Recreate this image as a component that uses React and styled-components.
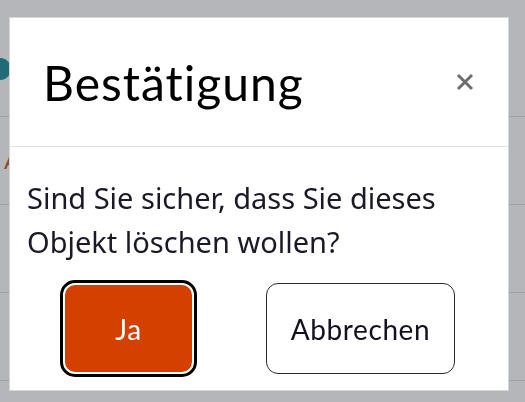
import React from "react";
import styled, { createGlobalStyle } from "styled-components";

const GlobalStyle = createGlobalStyle`
  html, body {
    margin: 0;
    padding: 0;
    background: #ffffff;
  }
  body {
    font-family: "Noto Sans", "Liberation Sans", sans-serif;
  }
`;

const Page = styled.div`
  width: 525px;
  height: 402px;
  overflow: hidden;
  background: #ffffff;
`;

const TopBar = styled.div`
  height: 116px;
  border-bottom: 1px solid #d8dbde;
  display: flex;
  align-items: center;
`;

const Logo = styled.span`
  display: inline-block;
  width: 22px;
  height: 22px;
  margin-left: -11px;
  margin-top: 22px;
  border-radius: 50%;
  background: #1a8a97;
`;

const Row = styled.div`
  height: 87px;
  border-bottom: 1px solid #d8dbde;
  display: flex;
  align-items: center;
  padding-left: 4px;
  color: #c4521a;
  font-size: 22px;
  font-family: "Lato", sans-serif;
`;

const Overlay = styled.div`
  position: fixed;
  inset: 0;
  background: rgba(46, 54, 62, 0.36);
`;

const Dialog = styled.div`
  position: fixed;
  left: 10px;
  top: 18px;
  width: 498px;
  height: 372px;
  background: #ffffff;
  box-shadow: 0 0 0 1px #d4d6d8;
  display: flex;
  flex-direction: column;
`;

const Header = styled.div`
  height: 128px;
  border-bottom: 1px solid #e2e2e2;
  display: flex;
  align-items: center;
  justify-content: space-between;
  padding: 0 32px 0 33px;
`;

const Title = styled.h2`
  margin: 0;
  font-family: "Lato", sans-serif;
  font-weight: 400;
  font-size: 48px;
  color: #000000;
  letter-spacing: 1px;
`;

const CloseButton = styled.button`
  border: none;
  background: transparent;
  padding: 0;
  width: 22px;
  height: 22px;
  display: flex;
  align-items: center;
  justify-content: center;
  cursor: pointer;
`;

const Body = styled.div`
  padding: 29px 17px 0;
  p {
    margin: 0;
    font-size: 29px;
    line-height: 44px;
    color: #1a1a26;
  }
`;

const Actions = styled.div`
  display: flex;
  justify-content: center;
  gap: 72px;
  margin-top: 19px;
`;

const ActionButton = styled.button`
  height: 91px;
  width: ${(p) => (p.$primary ? "131px" : "189px")};
  border-radius: 12px;
  font-family: "Lato", sans-serif;
  font-size: 28px;
  letter-spacing: 0.6px;
  cursor: pointer;
  background: ${(p) => (p.$primary ? "#d44000" : "#ffffff")};
  color: ${(p) => (p.$primary ? "#ffffff" : "#12121e")};
  border: ${(p) => (p.$primary ? "2px solid #ffffff" : "1px solid #2a2a36")};
  outline: ${(p) => (p.$primary ? "3px solid #000000" : "none")};
`;

export default function App() {
  return (
    <Page>
      <GlobalStyle />
      <TopBar>
        <Logo />
      </TopBar>
      <Row>A</Row>
      <Row />
      <Row />
      <Overlay />
      <Dialog role="dialog">
        <Header>
          <Title>Bestätigung</Title>
          <CloseButton aria-label="Schließen">
            <svg width="18" height="18" viewBox="0 0 18 18">
              <path
                d="M2 2 L16 16 M16 2 L2 16"
                stroke="#6e6e6e"
                strokeWidth="3"
                strokeLinecap="butt"
              />
            </svg>
          </CloseButton>
        </Header>
        <Body>
          <p>
            Sind Sie sicher, dass Sie dieses
            <br />
            Objekt löschen wollen?
          </p>
          <Actions>
            <ActionButton $primary>Ja</ActionButton>
            <ActionButton>Abbrechen</ActionButton>
          </Actions>
        </Body>
      </Dialog>
    </Page>
  );
}
